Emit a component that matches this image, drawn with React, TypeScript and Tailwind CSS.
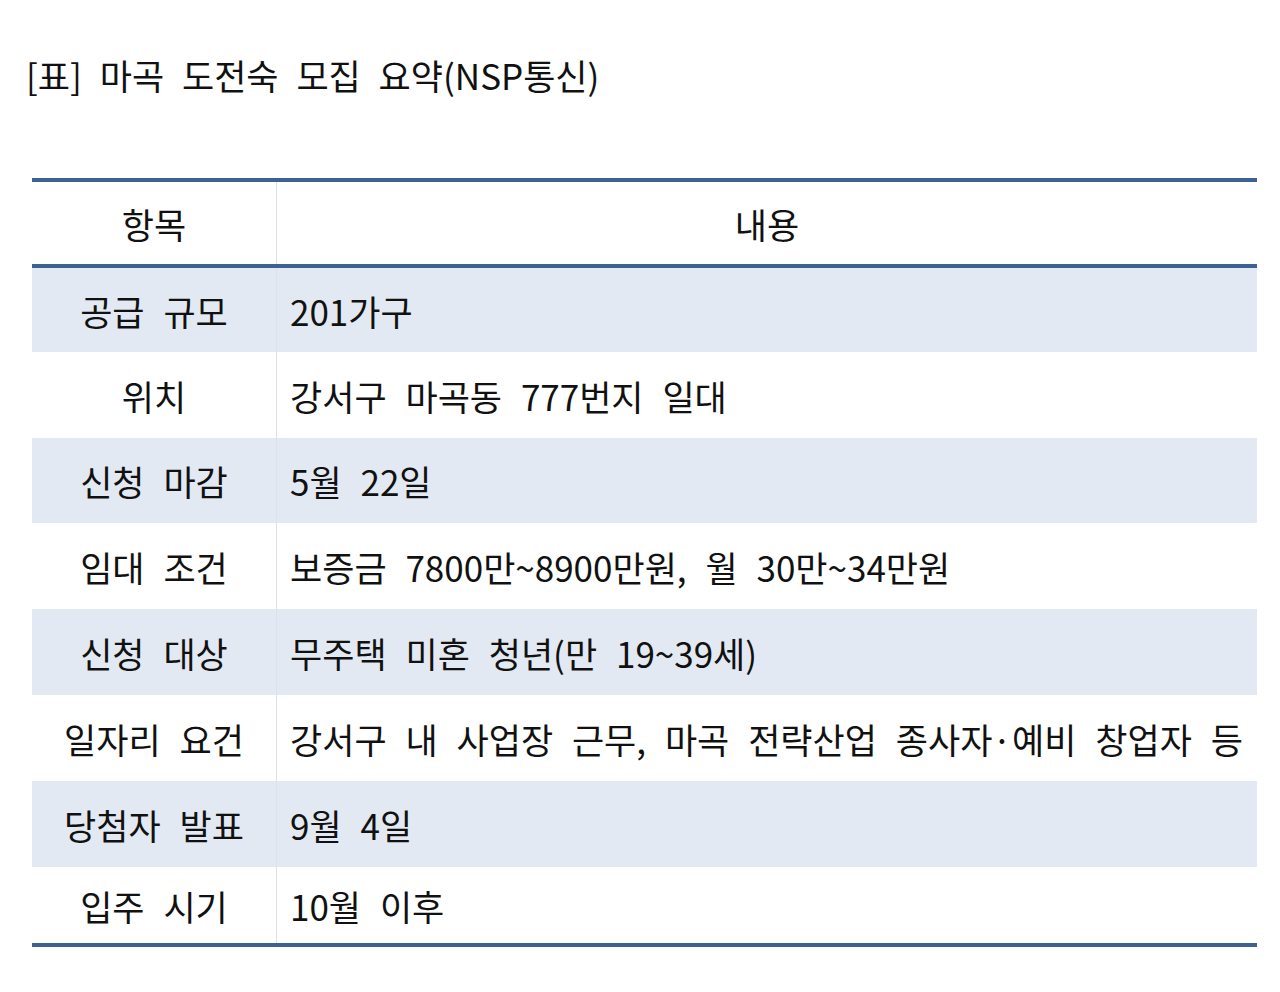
import React from "react";

const rows: { k: string; v: string; h: string; shade: boolean }[] = [
  { k: "공급 규모", v: "201가구", h: "h-[84px]", shade: true },
  { k: "위치", v: "강서구 마곡동 777번지 일대", h: "h-[86px]", shade: false },
  { k: "신청 마감", v: "5월 22일", h: "h-[85px]", shade: true },
  { k: "임대 조건", v: "보증금 7800만~8900만원, 월 30만~34만원", h: "h-[86px]", shade: false },
  { k: "신청 대상", v: "무주택 미혼 청년(만 19~39세)", h: "h-[86px]", shade: true },
  { k: "일자리 요건", v: "강서구 내 사업장 근무, 마곡 전략산업 종사자·예비 창업자 등", h: "h-[86px]", shade: false },
  { k: "당첨자 발표", v: "9월 4일", h: "h-[86px]", shade: true },
  { k: "입주 시기", v: "10월 이후", h: "h-[76px]", shade: false },
];

export default function App() {
  return (
    <div
      className="w-[1280px] h-[992px] bg-white text-[#111111] text-[35px] [word-spacing:11px] leading-none"
      style={{ fontFamily: '"Noto Sans CJK KR", "Noto Sans", sans-serif' }}
    >
      <div className="pt-[57px] pl-[26px] h-[178px]">
        <h1 className="font-normal text-[35px] [word-spacing:10px]">[표] 마곡 도전숙 모집 요약(NSP통신)</h1>
      </div>
      <div className="ml-[32px] w-[1225px] border-t-4 border-b-4 border-[#3e6194]">
        <div className="flex h-[86px] border-b-4 border-[#3e6194]">
          <div className="w-[245px] flex items-center justify-center border-r border-[#dbe2ec]">항목</div>
          <div className="flex-1 flex items-center justify-center">내용</div>
        </div>
        {rows.map((r) => (
          <div key={r.k} className={`flex ${r.h} ${r.shade ? "bg-[#e3e9f2]" : "bg-white"}`}>
            <div className="w-[245px] flex items-center justify-center border-r border-[#dbe2ec]">{r.k}</div>
            <div className="flex-1 flex items-center pl-[13px] whitespace-nowrap">{r.v}</div>
          </div>
        ))}
      </div>
    </div>
  );
}
